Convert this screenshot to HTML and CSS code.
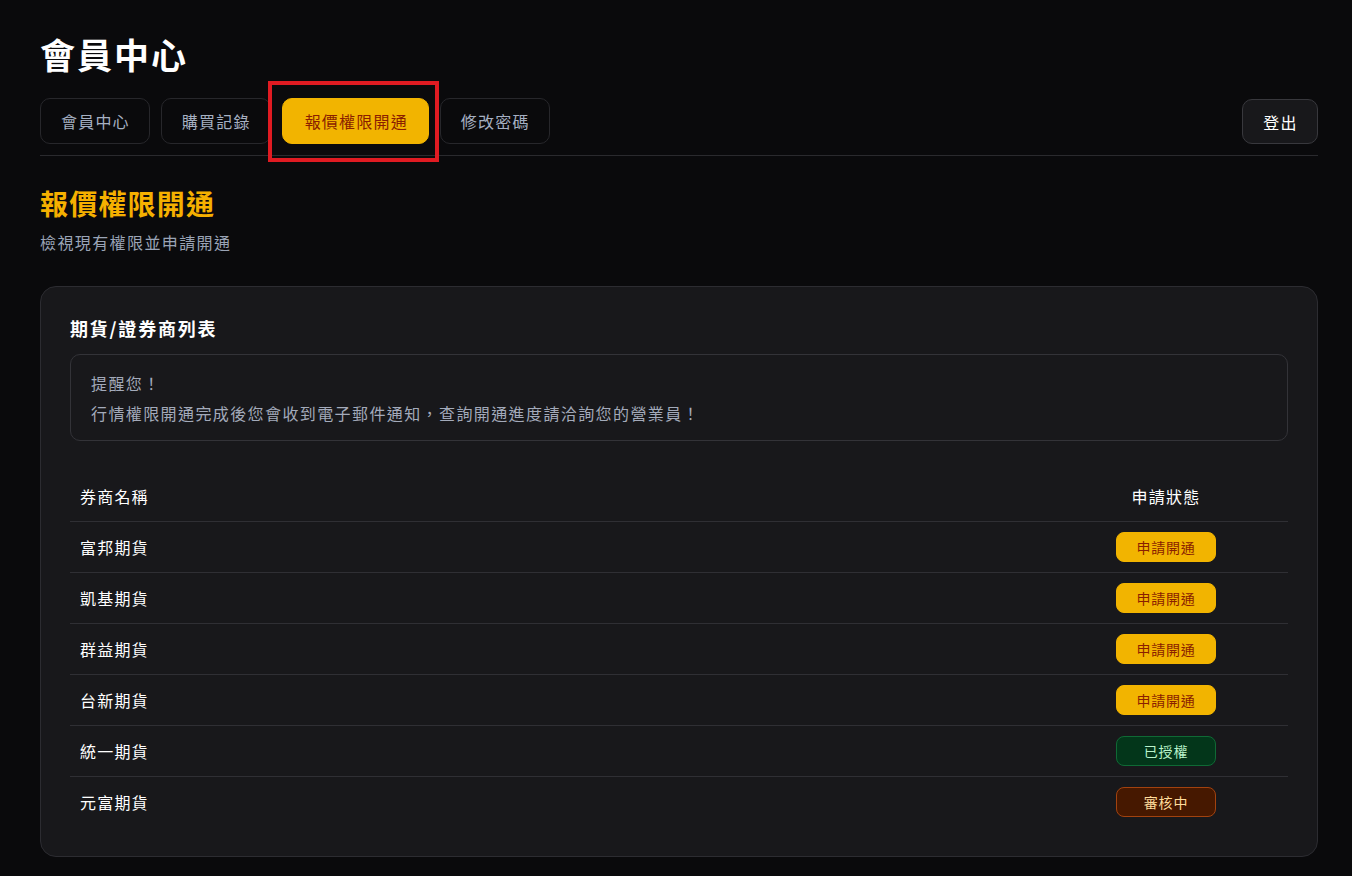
FILE: index.html
```html
<!DOCTYPE html>
<html lang="zh-Hant">
<head>
<meta charset="utf-8">
<title>會員中心</title>
<link rel="stylesheet" href="styles.css">
</head>
<body>
<div class="page">
  <h1 class="page-title">會員中心</h1>
  <nav class="tabbar">
    <div class="tabs">
      <a class="tab">會員中心</a>
      <a class="tab">購買記錄</a>
      <a class="tab tab-active">報價權限開通</a>
      <a class="tab">修改密碼</a>
    </div>
    <button class="logout">登出</button>
  </nav>

  <section class="section">
    <h2 class="section-title">報價權限開通</h2>
    <p class="section-sub">檢視現有權限並申請開通</p>

    <div class="card">
      <h3 class="card-title">期貨/證券商列表</h3>
      <div class="notice">
        <div>提醒您！</div>
        <div>行情權限開通完成後您會收到電子郵件通知，查詢開通進度請洽詢您的營業員！</div>
      </div>
      <table class="broker-table">
        <thead>
          <tr><th class="col-name">券商名稱</th><th class="col-status">申請狀態</th></tr>
        </thead>
        <tbody>
          <tr><td class="col-name">富邦期貨</td><td class="col-status"><span class="badge badge-apply">申請開通</span></td></tr>
          <tr><td class="col-name">凱基期貨</td><td class="col-status"><span class="badge badge-apply">申請開通</span></td></tr>
          <tr><td class="col-name">群益期貨</td><td class="col-status"><span class="badge badge-apply">申請開通</span></td></tr>
          <tr><td class="col-name">台新期貨</td><td class="col-status"><span class="badge badge-apply">申請開通</span></td></tr>
          <tr><td class="col-name">統一期貨</td><td class="col-status"><span class="badge badge-ok">已授權</span></td></tr>
          <tr><td class="col-name">元富期貨</td><td class="col-status"><span class="badge badge-pending">審核中</span></td></tr>
        </tbody>
      </table>
    </div>
  </section>
</div>
</body>
</html>
```

FILE: styles.css
```css
* { box-sizing: border-box; }

html, body {
  margin: 0;
  padding: 0;
  background: #0a0a0c;
  color: #ffffff;
  font-family: "Noto Sans CJK TC", "Noto Sans", "Liberation Sans", sans-serif;
}

.page {
  padding: 32px 34px 40px 40px;
}

.page-title {
  margin: 0 0 22px 0;
  font-size: 35px;
  line-height: 44px;
  font-weight: 700;
  letter-spacing: 2px;
  color: #ffffff;
}

.tabbar {
  display: flex;
  justify-content: space-between;
  align-items: flex-start;
  padding-bottom: 11px;
  border-bottom: 1px solid #2a2a2e;
}

.tabs {
  display: flex;
  gap: 11px;
}

.tab {
  position: relative;
  display: flex;
  align-items: center;
  height: 46px;
  padding: 0 19px 0 20px;
  border: 1px solid #27272b;
  border-radius: 10px;
  font-size: 16px;
  letter-spacing: 1.2px;
  color: #a6b0c2;
  background: #0a0a0c;
  white-space: nowrap;
}

.tab-active {
  padding: 0 20px 0 22px;
  background: #f2b400;
  border-color: #f2b400;
  color: #8a1e00;
}

.tab-active::after {
  content: "";
  position: absolute;
  left: -15px;
  right: -11px;
  top: -18px;
  bottom: -19px;
  border: 4px solid #e01b22;
  pointer-events: none;
}

.logout {
  height: 45px;
  margin-top: 1px;
  padding: 0 19px 0 20px;
  border: 1px solid #38383d;
  border-radius: 10px;
  background: #18181b;
  color: #ffffff;
  font-family: inherit;
  font-size: 16px;
  letter-spacing: 1.4px;
}

.section {
  padding-top: 29px;
}

.section-title {
  margin: 0;
  font-size: 28px;
  line-height: 36px;
  font-weight: 700;
  letter-spacing: 1.2px;
  color: #f5b000;
}

.section-sub {
  margin: 9px 0 0 0;
  font-size: 16px;
  line-height: 24px;
  letter-spacing: 1.4px;
  color: #9aa4b6;
}

.card {
  margin-top: 32px;
  padding: 28px 29px 29px 29px;
  background: #18181b;
  border: 1px solid #2c2c31;
  border-radius: 16px;
}

.card-title {
  margin: 0;
  font-size: 18px;
  line-height: 26px;
  font-weight: 700;
  letter-spacing: 1.8px;
  color: #ffffff;
}

.notice {
  margin-top: 13px;
  padding: 13px 20px 12px 20px;
  border: 1px solid #333338;
  border-radius: 10px;
  font-size: 16px;
  line-height: 30px;
  letter-spacing: 1.4px;
  color: #a3aaba;
}

.broker-table {
  width: 100%;
  margin-top: 30px;
  border-collapse: collapse;
  font-size: 16px;
  letter-spacing: 1.2px;
}

.broker-table th {
  height: 50px;
  font-weight: 400;
  color: #ffffff;
}

.broker-table td {
  height: 51px;
  border-top: 1px solid #2f2f34;
  color: #ffffff;
}

.col-name {
  text-align: left;
  padding: 0 10px;
}

.col-status {
  width: 244px;
  text-align: center;
}

.badge {
  display: inline-flex;
  align-items: center;
  justify-content: center;
  width: 100px;
  height: 30px;
  border-radius: 8px;
  font-size: 14px;
  letter-spacing: 0.8px;
  vertical-align: middle;
}

.badge-apply {
  background: #f2b400;
  border: 1px solid #f2b400;
  color: #8a1e00;
}

.badge-ok {
  background: #03361a;
  border: 1px solid #0f6a35;
  color: #b9f3cb;
}

.badge-pending {
  background: #461800;
  border: 1px solid #a2420f;
  color: #ffdc9c;
}
```
